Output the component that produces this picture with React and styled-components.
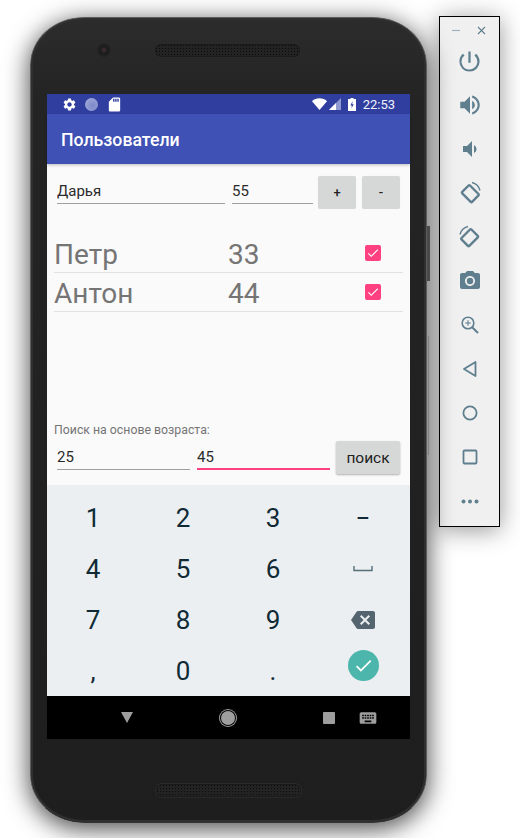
import React from "react";
import styled, { createGlobalStyle } from "styled-components";
import {
  MdSettings,
  MdSdStorage,
  MdPowerSettingsNew,
  MdVolumeUp,
  MdVolumeDown,
  MdPhotoCamera,
  MdBackspace,
  MdKeyboard,
  MdCheck,
} from "react-icons/md";

const GlobalStyle = createGlobalStyle`
  html, body {
    margin: 0;
    padding: 0;
    background: #fff;
    font-family: Roboto, "Liberation Sans", sans-serif;
  }
  * { box-sizing: border-box; }
`;

const Page = styled.div`
  display: flex;
  align-items: flex-start;
  width: 520px;
  height: 838px;
  overflow: hidden;
`;

const Phone = styled.div`
  position: relative;
  flex: none;
  display: flex;
  flex-direction: column;
  align-items: center;
  width: 397px;
  height: 806px;
  margin: 17px 0 0 30px;
  border: 1px solid #5c5c5c;
  border-bottom-color: #333;
  border-radius: 54px / 48px;
  background: linear-gradient(180deg, #2c2c2c 0, #242424 80px, #1e1e1e 100%);
  box-shadow: inset 0 0 0 2px #2f2f2f, 0 5px 24px 1px rgba(0, 0, 0, 0.7);
`;

const SideKey = styled.div`
  position: absolute;
  right: ${(p) => p.$right}px;
  top: ${(p) => p.$top}px;
  width: ${(p) => p.$w}px;
  height: ${(p) => p.$h}px;
  background: ${(p) => p.$color};
`;

const TopBezel = styled.div`
  display: flex;
  align-items: center;
  width: 100%;
  height: 76px;
  padding: 0 0 12px 66px;
`;

const Lens = styled.div`
  width: 14px;
  height: 14px;
  border-radius: 50%;
  margin-right: 44px;
  background: radial-gradient(circle, #3a2a30 0 1.5px, #1c1c1c 3px, #272727 100%);
`;

const Speaker = styled.div`
  width: 145px;
  height: 13px;
  border-radius: 6px;
  background-color: #232323;
  background-image: radial-gradient(#0b0b0b 0.9px, transparent 1px);
  background-size: 3px 3px;
  box-shadow: inset 0 0 0 1px #1a1a1a, 0 0 0 1px #2a2a2a;
`;

const BottomBezel = styled.div`
  display: flex;
  justify-content: center;
  width: 100%;
  padding: 45px 0 0 0;
`;

const Screen = styled.div`
  display: flex;
  flex-direction: column;
  width: 363px;
  height: 645px;
  background: #fafafa;
`;

const StatusBar = styled.div`
  display: flex;
  align-items: center;
  flex: none;
  height: 20px;
  padding: 0 15px;
  background: #303f9f;
  color: #fff;
`;

const StatusGroup = styled.div`
  display: flex;
  align-items: center;
  gap: ${(p) => p.$gap}px;
  margin-left: ${(p) => (p.$right ? "auto" : 0)};
`;

const Dot = styled.div`
  width: 13px;
  height: 13px;
  border-radius: 50%;
  background: radial-gradient(circle at 60% 60%, #7c88c8, #a7b0de);
`;

const Clock = styled.span`
  font-size: 13px;
  color: #f1f2fa;
`;

const AppBar = styled.div`
  position: relative;
  flex: none;
  display: flex;
  align-items: center;
  height: 50px;
  padding: 1px 14px 0;
  background: #3f51b5;
  color: #fff;
  font-size: 17.7px;
  font-weight: 500;
  box-shadow: 0 1px 3px rgba(0, 0, 0, 0.25);
`;

const Content = styled.div`
  flex: 1;
  display: flex;
  flex-direction: column;
`;

const AddForm = styled.div`
  display: flex;
  align-items: flex-start;
  padding: 12px 0 0 10px;
`;

const Field = styled.input`
  width: ${(p) => p.$w}px;
  height: 28px;
  margin-right: ${(p) => p.$mr}px;
  padding: 3px 0 0 0;
  border: 0;
  border-bottom: ${(p) => (p.$active ? "2px solid #ff4081" : "1px solid #a0a0a0")};
  border-radius: 0;
  outline: 0;
  background: transparent;
  font-family: inherit;
  font-size: 15px;
  color: #2b2b2b;
`;

const Btn = styled.div`
  display: flex;
  align-items: center;
  justify-content: center;
  width: ${(p) => p.$w}px;
  height: 33px;
  margin-right: ${(p) => p.$mr || 0}px;
  border-radius: 2px;
  background: #d6d7d7;
  color: #222;
  font-size: ${(p) => p.$fs || 13}px;
  font-weight: ${(p) => p.$weight || 500};
  box-shadow: ${(p) => (p.$raised ? "0 1px 2px rgba(0,0,0,.3)" : "0 0 1px rgba(0,0,0,.1)")};
`;

const UserList = styled.div`
  width: 349px;
  margin: 25px 0 0 7px;
`;

const UserRow = styled.div`
  display: grid;
  grid-template-columns: 174px 137px 16px;
  align-items: center;
  height: 39px;
  border-bottom: 1px solid #e2e2e2;
  color: #757575;
  font-size: 28px;
`;

const UserText = styled.span`
  padding-top: 3px;
`;

const CheckMark = styled.div`
  display: flex;
  align-items: center;
  justify-content: center;
  width: 16px;
  height: 16px;
  border-radius: 2px;
  background: #ff4081;
  color: #fff;
`;

const SearchBlock = styled.div`
  margin-top: auto;
  padding: 0 0 11px 7px;
`;

const SearchLabel = styled.div`
  height: 14px;
  margin-bottom: 4px;
  font-size: 12.3px;
  line-height: 14px;
  color: #757575;
`;

const SearchRow = styled.div`
  display: flex;
  align-items: flex-start;
  padding-left: 3px;
  ${Field} {
    margin-top: 1px;
  }
`;

const Keyboard = styled.div`
  flex: none;
  display: grid;
  grid-template-columns: repeat(4, 90px);
  grid-auto-rows: 51px;
  height: 211px;
  padding: 7px 2px 0 1px;
  background: #eceff1;
  color: #0f2a35;
`;

const Key = styled.div`
  display: flex;
  align-items: center;
  justify-content: center;
  padding-top: 1px;
  font-size: 26px;
  color: inherit;
`;

const EnterKey = styled.div`
  display: flex;
  align-items: center;
  justify-content: center;
  width: 31px;
  height: 31px;
  margin-bottom: 11px;
  border-radius: 50%;
  background: #4db6ac;
  color: #fff;
`;

const NavBar = styled.div`
  flex: none;
  display: flex;
  align-items: center;
  height: 43px;
  padding: 0 0 0 74px;
  background: #000;
`;

const NavHome = styled.div`
  width: 14px;
  height: 14px;
  margin: 0 88px;
  border-radius: 50%;
  background: #9e9e9e;
  box-shadow: 0 0 0 1px #000, 0 0 0 2px #9e9e9e;
`;

const NavSquare = styled.div`
  width: 12px;
  height: 12px;
  margin-right: 23px;
  border-radius: 1px;
  background: #9e9e9e;
`;

const ToolPanel = styled.div`
  flex: none;
  display: flex;
  flex-direction: column;
  align-items: center;
  width: 61px;
  height: 511px;
  margin: 16px 0 0 12px;
  border: 1px solid #000;
  background: #f0f0f0;
  color: #5f7f8f;
  box-shadow: 0 3px 24px rgba(0, 0, 0, 0.42);
`;

const WindowButtons = styled.div`
  display: flex;
  align-items: center;
  justify-content: space-between;
  flex: none;
  width: 100%;
  height: 22px;
  padding: 4px 13px 0 12px;
`;

const ToolIcon = styled.div`
  display: flex;
  align-items: center;
  justify-content: center;
  flex: none;
  width: 100%;
  height: 44px;
`;

const MinimizeIcon = () => (
  <svg width="9" height="9" viewBox="0 0 9 9" stroke="#9fb2bc" strokeWidth="1.2">
    <path d="M0 4.5h8" />
  </svg>
);

const CloseIcon = () => (
  <svg width="9" height="9" viewBox="0 0 9 9" stroke="currentColor" strokeWidth="1.1" fill="none">
    <path d="M1 1l7 7M8 1 1 8" />
  </svg>
);

const RotateIcon = ({ flip }) => (
  <svg width="26" height="26" viewBox="0 0 26 26" fill="none" stroke="currentColor">
    <g transform={flip ? "translate(26 0) scale(-1 1)" : undefined}>
      <rect x="6" y="8" width="14" height="11" rx="1" strokeWidth="2.4" transform="rotate(45 13 14)" />
      <path d="M15 2.5a11 11 0 0 1 8 8" strokeWidth="1.4" />
    </g>
  </svg>
);

const ZoomIcon = () => (
  <svg width="18" height="18" viewBox="0 0 18 18" fill="none" stroke="currentColor">
    <circle cx="7" cy="7" r="5.8" strokeWidth="1.6" />
    <path d="M7 4.2v5.6M4.2 7h5.6" strokeWidth="1.1" />
    <path d="M11.2 11.2l5.8 5.8" strokeWidth="2" />
  </svg>
);

const WifiIcon = () => (
  <svg width="15" height="12" viewBox="0 0 15 12">
    <path d="M0 3.2C4-.6 11-.6 15 3.2L7.5 12z" fill="#fff" />
  </svg>
);

const SignalIcon = () => (
  <svg width="12" height="12" viewBox="0 0 12 12">
    <path d="M12 0v12H0z" fill="#8f99d2" />
    <path d="M7 5v7H0z" fill="#fff" />
  </svg>
);

const BatteryIcon = () => (
  <svg width="8" height="13" viewBox="0 0 8 13">
    <path d="M2.5 0h3v1H8v12H0V1h2.5z" fill="#fff" />
    <path d="M4.6 3 2.4 7.4h1.5L3.4 10.6l2.3-4.4H4.2z" fill="#303f9f" />
  </svg>
);

const SpaceIcon = () => (
  <svg width="20" height="6" viewBox="0 0 20 6" fill="none" stroke="#546e7a" strokeWidth="1.4">
    <path d="M1 0v4.5h18V0" />
  </svg>
);

const users = [
  { name: "Петр", age: 33 },
  { name: "Антон", age: 44 },
];

const keys = ["1", "2", "3", "−", "4", "5", "6", "space", "7", "8", "9", "back", ",", "0", ".", "enter"];

function renderKey(k) {
  if (k === "space") return <Key key={k}><SpaceIcon /></Key>;
  if (k === "back") return <Key key={k}><MdBackspace size={24} color="#546570" /></Key>;
  if (k === "enter") {
    return (
      <Key key={k}>
        <EnterKey><MdCheck size={21} /></EnterKey>
      </Key>
    );
  }
  return <Key key={k}>{k}</Key>;
}

export default function App() {
  return (
    <Page>
      <GlobalStyle />
      <Phone>
        <SideKey $right={-4} $top={208} $w={3} $h={55} $color="#4a4a4a" />
        <SideKey $right={-3} $top={318} $w={1} $h={119} $color="#808080" />
        <TopBezel>
          <Lens />
          <Speaker />
        </TopBezel>
        <Screen>
          <StatusBar>
            <StatusGroup $gap={8}>
              <MdSettings size={15} />
              <Dot />
              <MdSdStorage size={17} />
            </StatusGroup>
            <StatusGroup $right $gap={7}>
              <StatusGroup $gap={2}>
                <WifiIcon />
                <SignalIcon />
              </StatusGroup>
              <BatteryIcon />
              <Clock>22:53</Clock>
            </StatusGroup>
          </StatusBar>
          <AppBar>Пользователи</AppBar>
          <Content>
            <AddForm>
              <Field $w={168} $mr={7} defaultValue="Дарья" />
              <Field $w={81} $mr={5} defaultValue="55" />
              <Btn $w={38} $mr={6}>+</Btn>
              <Btn $w={38}>-</Btn>
            </AddForm>
            <UserList>
              {users.map((u) => (
                <UserRow key={u.name}>
                  <UserText>{u.name}</UserText>
                  <UserText>{u.age}</UserText>
                  <CheckMark><MdCheck size={14} /></CheckMark>
                </UserRow>
              ))}
            </UserList>
            <SearchBlock>
              <SearchLabel>Поиск на основе возраста:</SearchLabel>
              <SearchRow>
                <Field $w={133} $mr={7} defaultValue="25" />
                <Field $w={133} $mr={6} $active defaultValue="45" />
                <Btn $w={64} $fs={15.5} $weight={400} $raised>поиск</Btn>
              </SearchRow>
            </SearchBlock>
          </Content>
          <Keyboard>{keys.map(renderKey)}</Keyboard>
          <NavBar>
            <svg width="12" height="11" viewBox="0 0 12 11">
              <path d="M0 0h12L6 11z" fill="#9e9e9e" />
            </svg>
            <NavHome />
            <NavSquare />
            <MdKeyboard size={20} color="#9e9e9e" />
          </NavBar>
        </Screen>
        <BottomBezel>
          <Speaker />
        </BottomBezel>
      </Phone>
      <ToolPanel>
        <WindowButtons>
          <MinimizeIcon />
          <CloseIcon />
        </WindowButtons>
        <ToolIcon><MdPowerSettingsNew size={27} /></ToolIcon>
        <ToolIcon><MdVolumeUp size={26} /></ToolIcon>
        <ToolIcon><MdVolumeDown size={24} /></ToolIcon>
        <ToolIcon><RotateIcon /></ToolIcon>
        <ToolIcon><RotateIcon flip /></ToolIcon>
        <ToolIcon><MdPhotoCamera size={24} /></ToolIcon>
        <ToolIcon><ZoomIcon /></ToolIcon>
        <ToolIcon>
          <svg width="16" height="18" viewBox="0 0 16 18" fill="none" stroke="currentColor" strokeWidth="1.8">
            <path d="M13.5 2 2 9l11.5 7z" strokeLinejoin="round" />
          </svg>
        </ToolIcon>
        <ToolIcon>
          <svg width="16" height="16" viewBox="0 0 16 16" fill="none" stroke="currentColor" strokeWidth="1.8">
            <circle cx="8" cy="8" r="6.6" />
          </svg>
        </ToolIcon>
        <ToolIcon>
          <svg width="16" height="16" viewBox="0 0 16 16" fill="none" stroke="currentColor" strokeWidth="1.8">
            <rect x="1.5" y="1.5" width="13" height="13" rx="1" />
          </svg>
        </ToolIcon>
        <ToolIcon>
          <svg width="18" height="5" viewBox="0 0 18 5" fill="currentColor">
            <circle cx="2.5" cy="2.5" r="2" />
            <circle cx="9" cy="2.5" r="2" />
            <circle cx="15.5" cy="2.5" r="2" />
          </svg>
        </ToolIcon>
      </ToolPanel>
    </Page>
  );
}
